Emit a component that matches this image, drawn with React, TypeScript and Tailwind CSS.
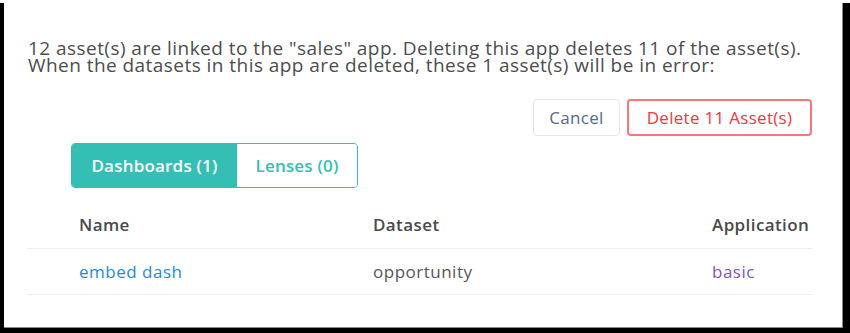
// Delete app confirmation dialog

const rows = [{ name: 'embed dash', dataset: 'opportunity', app: 'basic' }];

const App = () => {
  return (
    <div
      className="w-[850px] h-[333px] bg-black"
      style={{ fontFamily: '"Open Sans", "Liberation Sans", sans-serif' }}
    >
      <div className="ml-[4px] mt-[3px] w-[839px] h-[325px] bg-white border-r border-b border-[#8a8a8a] flex flex-col">
        {/* Message */}
        <div className="pl-[24px] pt-[37px] text-[19px] leading-[17px] tracking-[0.45px] text-[#4d4d4d]">
          <p>12 asset(s) are linked to the "sales" app. Deleting this app deletes 11 of the asset(s).</p>
          <p>When the datasets in this app are deleted, these 1 asset(s) will be in error:</p>
        </div>

        {/* Actions */}
        <div className="flex justify-end gap-[7px] pr-[30px] mt-[25px]">
          <button className="w-[87px] h-[37px] rounded-[4px] border border-[#e3e6ec] text-[17px] tracking-[0.3px] text-[#54698d]">
            Cancel
          </button>
          <button className="w-[185px] h-[37px] rounded-[4px] border-2 border-[#fb7676] text-[17px] tracking-[0.3px] text-[#f2363b]">
            Delete 11 Asset(s)
          </button>
        </div>

        {/* Tabs */}
        <div className="ml-[67px] mt-[7px] flex w-[287px] h-[45px] rounded-[4px] border border-[#33bfb3] overflow-hidden text-[17px] tracking-[0.2px] font-semibold">
          <div className="w-[165px] bg-[#33bfb3] text-white flex items-center justify-center">
            Dashboards (1)
          </div>
          <div className="flex-1 bg-white text-[#33bfb3] flex items-center justify-center">
            Lenses (0)
          </div>
        </div>

        {/* Table */}
        <div className="ml-[23px] mt-[27px] w-[785px]">
          <div className="grid grid-cols-[346px_339px_100px] h-[34px] items-start border-b border-[#eceef1] text-[17px] leading-[20px] tracking-[0.4px] font-semibold text-[#4a4a4a]">
            <div className="pl-[52px]">Name</div>
            <div>Dataset</div>
            <div>Application</div>
          </div>
          {rows.map((row) => (
            <div
              key={row.name}
              className="grid grid-cols-[346px_339px_100px] h-[46px] items-center border-b border-[#eceef1] text-[17px] tracking-[0.5px]"
            >
              <div className="pl-[52px] text-[#1b8aeb]">{row.name}</div>
              <div className="text-[#575757]">{row.dataset}</div>
              <div className="text-[#8552b8]">{row.app}</div>
            </div>
          ))}
        </div>
      </div>
    </div>
  );
};

export default App;
